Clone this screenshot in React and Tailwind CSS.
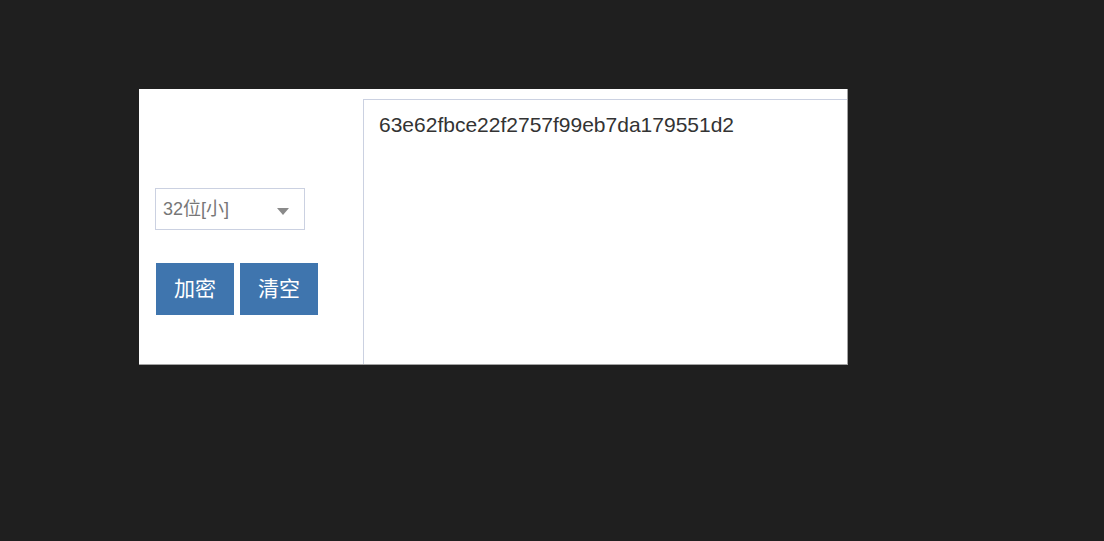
export default function App() {
  return (
    <div
      className="min-h-[541px] w-full bg-[#1f1f1f] pt-[89px] pl-[139px]"
      style={{ fontFamily: '"Liberation Sans", Arial, "Noto Sans CJK SC", sans-serif' }}
    >
      <div className="flex h-[276px] w-[709px] overflow-hidden border-r border-b border-[#a3a3a3] bg-white">
        <div className="w-[224px] shrink-0 pl-4 pt-[99px]">
          <div className="relative flex h-[42px] w-[150px] items-center border border-[#cbd1e1] pl-[7px] text-[18px] text-[#777]">
            <span>32位[小]</span>
            <span className="absolute right-[15px] top-[19px] h-0 w-0 border-x-[6px] border-t-[7px] border-x-transparent border-t-[#8a8a8a]" />
          </div>
          <div className="mt-[33px] flex gap-[6px] pl-px">
            <button className="h-[52px] w-[78px] bg-[#3f75ae] text-[21px] text-white">加密</button>
            <button className="h-[52px] w-[78px] bg-[#3f75ae] text-[21px] text-white">清空</button>
          </div>
        </div>
        <div className="mt-[10px] h-[300px] w-[560px] shrink-0 border border-[#cbd1e1] px-[15px] pt-[13px] text-[21px] leading-6 text-[#333]">
          63e62fbce22f2757f99eb7da179551d2
        </div>
      </div>
    </div>
  );
}
